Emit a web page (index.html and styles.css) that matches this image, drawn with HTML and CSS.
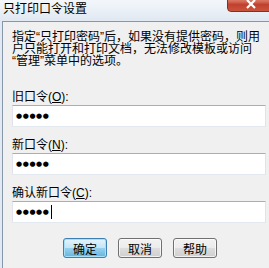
FILE: index.html
```html
<!DOCTYPE html>
<html lang="zh-CN">
<head>
    <meta charset="UTF-8">
    <title>只打印口令设置</title>
    <link rel="stylesheet" href="styles.css">
</head>
<body>
<div class="dialog">
    <div class="titlebar">
        <span class="title">只打印口令设置</span>
        <span class="close">
            <svg width="10" height="9" viewBox="0 0 10 9">
                <path d="M1 0 L9 8 M9 0 L1 8" stroke="#fff" stroke-width="2.2"/>
            </svg>
        </span>
    </div>
    <div class="client">
        <p class="info">指定“只打印密码”后，如果没有提供密码，则用户只能打开和打印文档，无法修改模板或访问“管理”菜单中的选项。</p>

        <div class="field">
            <label for="oldPwd">旧口令(<u>O</u>):</label>
            <div class="fakeInput" id="oldPwd">
                <span class="dots">●●●●●</span>
            </div>
        </div>
        <div class="field">
            <label for="newPwd">新口令(<u>N</u>):</label>
            <div class="fakeInput" id="newPwd">
                <span class="dots">●●●●●</span>
            </div>
        </div>
        <div class="field">
            <label for="confirmPwd">确认新口令(<u>C</u>):</label>
            <div class="fakeInput" id="confirmPwd">
                <span class="dots">●●●●●</span><span class="caret"></span>
            </div>
        </div>

        <div class="buttons">
            <button class="btn btnDefault">确定</button>
            <button class="btn">取消</button>
            <button class="btn">帮助</button>
        </div>
    </div>
</div>
</body>
</html>
```

FILE: styles.css
```css
body {
    margin: 0;
    padding: 0;
    background-color: #F0F0F0;
    overflow: hidden;
}
.dialog {
    width: 269px;
    height: 268px;
    display: flex;
    flex-direction: column;
    overflow: hidden;
    background-color: #E2E9F2;
    font-family: "Liberation Sans", "Noto Sans CJK SC", sans-serif;
    font-size: 12px;
    color: #000;
}
.titlebar {
    height: 21px;
    flex-shrink: 0;
    display: flex;
    align-items: flex-start;
    background: linear-gradient(#F3F7FB, #E0E8F1);
}
.title {
    padding: 2px 0 0 3px;
    font-size: 12px;
    line-height: 14px;
}
.close {
    margin-left: auto;
    margin-top: -6px;
    margin-right: -6px;
    width: 48px;
    height: 18px;
    display: flex;
    align-items: center;
    justify-content: center;
    padding-top: 1px;
    box-sizing: border-box;
    border: 1px solid #7A3328;
    border-radius: 0 0 4px 4px;
    background: linear-gradient(#E8A596 0%, #D66B57 40%, #C1402E 60%, #C9553F 100%);
}
.close svg {
    margin-top: 2px;
}
.client {
    flex: 1;
    margin-left: 2px;
    border-left: 1px solid #8797AA;
    border-top: 1px solid #8797AA;
    background-color: #F0F0F0;
    padding: 9px 0 0 9px;
}
.info {
    margin: 0;
    width: 250px;
    line-height: 12px;
}
.field {
    display: flex;
    flex-direction: column;
    margin-top: 12px;
}
.info + .field {
    margin-top: 24px;
}
.field label {
    line-height: 12px;
    margin-bottom: 2px;
}
.field u {
    text-decoration-thickness: 1px;
    text-underline-offset: 1px;
}
.fakeInput {
    width: 254px;
    height: 22px;
    box-sizing: border-box;
    display: flex;
    align-items: center;
    padding-left: 3px;
    border: 1px solid #E2E3EA;
    border-top-color: #ABADB3;
    border-bottom-color: #E3E9EF;
    background-color: #FFF;
    font-family: "DejaVu Sans", sans-serif;
    color: #000;
}
.dots {
    font-size: 7px;
    letter-spacing: 0.6px;
}
.caret {
    width: 1px;
    height: 14px;
    margin-left: 1px;
    background-color: #000;
}
.buttons {
    display: flex;
    gap: 11px;
    margin-top: 15px;
    padding-left: 51px;
}
.btn {
    width: 44px;
    height: 20px;
    padding: 0;
    border: 1px solid #707070;
    border-radius: 3px;
    background: linear-gradient(#F2F2F2 0%, #EBEBEB 50%, #DDDDDD 51%, #CFCFCF 100%);
    font-family: "Liberation Sans", "Noto Sans CJK SC", sans-serif;
    font-size: 12px;
    color: #000;
    box-shadow: inset 0 0 0 1px rgba(255, 255, 255, 0.7);
}
.btnDefault {
    border-color: #3C7FB1;
    background: linear-gradient(#E5F4FC 0%, #C4E5F6 50%, #98D1EF 51%, #68B3DB 100%);
    box-shadow: inset 0 0 0 1px #A6E0F8;
}
```
